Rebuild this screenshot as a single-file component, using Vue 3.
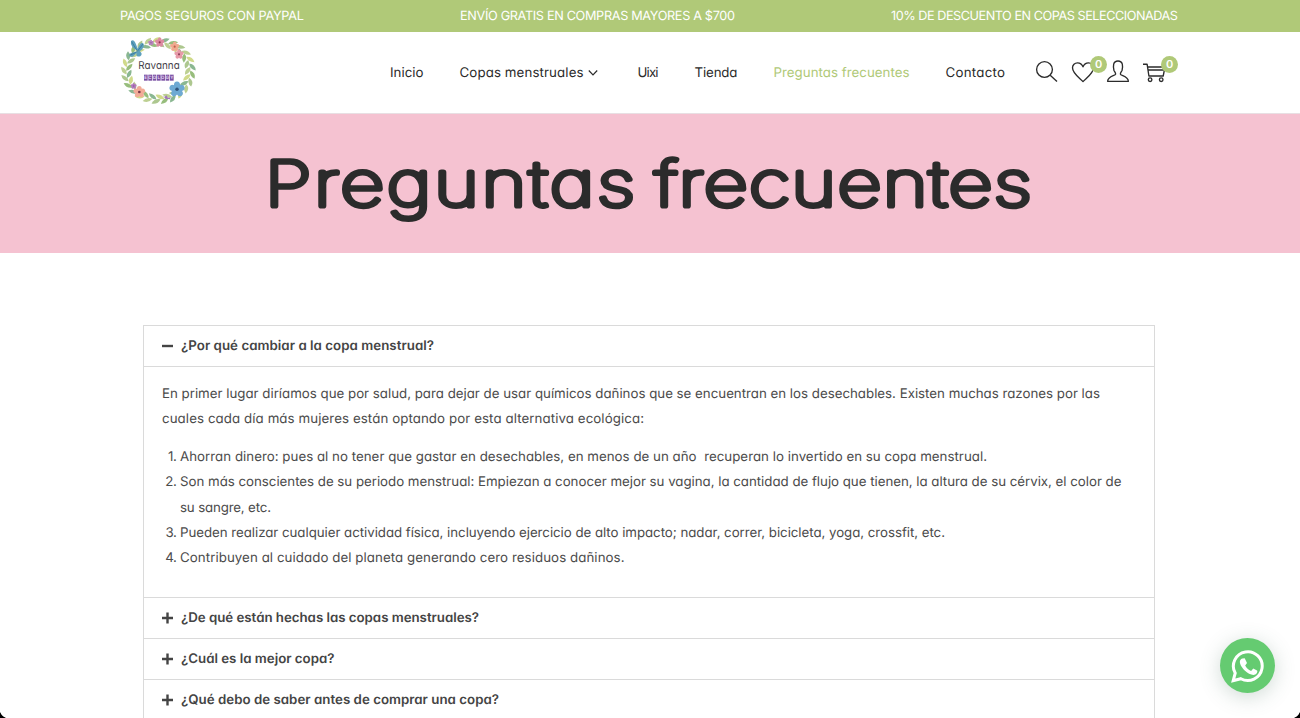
<script setup>
const promos = [
  { text: 'PAGOS SEGUROS CON PAYPAL', width: 184 },
  { text: 'ENVÍO GRATIS EN COMPRAS MAYORES A $700', width: 275 },
  { text: '10% DE DESCUENTO EN COPAS SELECCIONADAS', width: 287 },
]

const links = [
  { text: 'Inicio', width: 33.5 },
  { text: 'Copas menstruales', width: 124, menu: true },
  { text: 'Uixi', width: 21 },
  { text: 'Tienda', width: 43 },
  { text: 'Preguntas frecuentes', width: 136, active: true },
  { text: 'Contacto', width: 59.5 },
]

const intro = [
  { text: 'En primer lugar diríamos que por salud, para dejar de usar químicos dañinos que se encuentran en los desechables. Existen muchas razones por las', width: 938 },
  { text: 'cuales cada día más mujeres están optando por esta alternativa ecológica:', width: 482 },
]

const reasons = [
  [{ text: 'Ahorran dinero: pues al no tener que gastar en desechables, en menos de un año\u00a0 recuperan lo invertido en su copa menstrual.', width: 807 }],
  [
    { text: 'Son más conscientes de su periodo menstrual: Empiezan a conocer mejor su vagina, la cantidad de flujo que tienen, la altura de su cérvix, el color de', width: 941.5 },
    { text: 'su sangre, etc.', width: 91 },
  ],
  [{ text: 'Pueden realizar cualquier actividad física, incluyendo ejercicio de alto impacto; nadar, correr, bicicleta, yoga, crossfit, etc.', width: 765 }],
  [{ text: 'Contribuyen al cuidado del planeta generando cero residuos dañinos.', width: 444.5 }],
]

const questions = [
  { text: '¿De qué están hechas las copas menstruales?', width: 298 },
  { text: '¿Cuál es la mejor copa?', width: 153.5 },
  { text: '¿Qué debo de saber antes de comprar una copa?', width: 318 },
]

// Leaves around the logo wreath: position on the ring, tilt and colour
const greens = ['#bdd092', '#97bd7c', '#d0da8a', '#adc78f', '#8ab791']
const leaves = Array.from({ length: 50 }, (_, i) => {
  const angle = i * (360 / 50)
  return {
    color: greens[i % greens.length],
    transform: `translate(145 122) scale(1.05 0.94) rotate(${angle}) translate(${i % 2 ? 98 : 84} 0) rotate(${i % 2 ? 58 : 122})`,
  }
})
const flowers = [
  { x: 149, y: 37, r: 8, c: '#dc8ba0', m: '#8f3950' },
  { x: 207, y: 73, r: 8, c: '#e79aa8', m: '#91405a' },
  { x: 194, y: 50, r: 8, c: '#f0aa90', m: '#c05e4b' },
  { x: 88, y: 186, r: 10, c: '#f2ab97', m: '#793747' },
  { x: 201, y: 178, r: 13, c: '#6ea9d3', m: '#31557c' },
  { x: 71, y: 168, r: 5, c: '#b276bd', m: '#88559d' },
  { x: 123, y: 38, r: 5, c: '#b885bd', m: '#91629e' },
]
const petals = [0, 72, 144, 216, 288]

// Tracks a line of text so that it fills its measure
const vFit = {
  mounted(el, { value }) {
    const spacing = (value - el.getBoundingClientRect().width) / (el.textContent.length - 1)
    el.style.letterSpacing = `${spacing}px`
    el.style.marginRight = `${-spacing}px`
  },
}
</script>

<template>
  <div class="page">
    <div class="promo">
      <span v-for="p in promos" :key="p.text" v-fit="p.width" class="line">{{ p.text }}</span>
    </div>

    <header class="header">
      <div class="logo">
        <svg viewBox="0 0 300 255" width="100" height="85">
          <path v-for="(l, i) in leaves" :key="i" :transform="l.transform" d="M-14 0Q0 -12 15 0Q0 11 -14 0Z" :fill="l.color" />
          <path d="M85 63Q59 51 63 33Q71 25 78 43L83 56Q92 34 101 41Q104 54 89 64Q100 72 91 79Q78 83 79 68Q67 86 58 78Q56 69 73 66Z" fill="#5da0bd" />
          <path d="M81 62L65 35M81 65L99 42M79 67L61 75" stroke="#407f9e" stroke-width="3" fill="none" />
          <g v-for="f in flowers" :key="f.x" :transform="`translate(${f.x} ${f.y})`">
            <ellipse v-for="a in petals" :key="a" :transform="`rotate(${a})`" cx="0" :cy="-f.r * 0.9" :rx="f.r * 0.72" :ry="f.r * 0.9" :fill="f.c" />
            <circle :r="f.r * 0.4" :fill="f.m" />
          </g>
          <path d="M157 196l7 5 5 -5 5 8 8 -2 -2 6 -13 -2z" fill="#a174ba" />
          <text class="logo-name" x="85" y="118" textLength="124" lengthAdjust="spacingAndGlyphs">Ravanna</text>
          <g fill="#7950a3">
            <rect v-for="n in 7" :key="n" :x="89 + n * 13" y="134" width="11" height="18" />
          </g>
          <text class="logo-tag" x="103" y="148" textLength="87">ECOLOGY</text>
        </svg>
      </div>
      <nav class="nav">
        <a v-for="l in links" :key="l.text" class="link" :class="{ active: l.active, menu: l.menu }">
          <span v-fit="l.width" class="line">{{ l.text }}</span>
          <svg v-if="l.menu" class="chevron" viewBox="0 0 10 8" width="10" height="8"><path d="M.8 1.5L5 5.8L9.2 1.5" /></svg>
        </a>
      </nav>
      <div class="tools">
        <svg class="icon" viewBox="0 0 24 24"><circle cx="9.5" cy="9.5" r="7.9" /><path d="M15.2 15.2L22 21.5" /></svg>
        <span class="tool">
          <svg class="icon" viewBox="0 0 24 24"><path d="M12 21.6C9.5 18.7 1.5 13.8 1.5 7.8C1.5 4.7 3.8 2.8 6.5 2.8C9 2.8 11 4.3 12 6.8C13 4.3 15 2.8 17.5 2.8C20.2 2.8 22.5 4.7 22.5 7.8C22.5 13.8 14.5 18.7 12 21.6Z" /></svg>
          <b class="badge">0</b>
        </span>
        <svg class="icon" viewBox="0 0 24 24"><path d="M9.6 14.1C9.8 12.7 8.5 11.9 7.9 10.2C7.4 8.2 7.4 5.5 7.7 4.2C8.2 2.2 9.7 1 12 1S15.8 2.2 16.3 4.2C16.6 5.5 16.6 8.2 16.1 10.2C15.5 11.9 14.2 12.7 14.4 14.1C14.6 16 21.8 15.8 22.4 21.3H1.6C2.2 15.8 9.4 16 9.6 14.1Z" /></svg>
        <span class="tool">
          <svg class="icon" viewBox="0 0 24 24"><path d="M1 4.2H5.1L6.9 16H21.2L23 7H5.6M6 10H22M7 16H21" /><circle cx="8.1" cy="19.7" r="1.8" /><circle cx="19.2" cy="19.7" r="1.8" /></svg>
          <b class="badge">0</b>
        </span>
      </div>
    </header>

    <section class="hero">
      <h1 class="title">
        <svg width="1300" height="139" viewBox="0 0 1300 139">
          <g class="letters" transform="scale(1.24 1)">
            <text x="213.5" y="91.5" textLength="298.5">Preguntas</text>
            <text x="528" y="91.5" textLength="304">frecuentes</text>
          </g>
        </svg>
      </h1>
    </section>

    <main class="accordion">
      <div class="question">
        <svg class="sign" viewBox="0 0 12 12"><path d="M0 6H11" /></svg>
        <span v-fit="253" class="line">¿Por qué cambiar a la copa menstrual?</span>
      </div>
      <div class="answer">
        <p class="intro">
          <span v-for="l in intro" :key="l.text" class="row"><span v-fit="l.width" class="line">{{ l.text }}</span></span>
        </p>
        <div v-for="(r, i) in reasons" :key="i" class="reason">
          <span class="number">{{ i + 1 }}.</span>
          <div>
            <span v-for="l in r" :key="l.text" class="row"><span v-fit="l.width" class="line">{{ l.text }}</span></span>
          </div>
        </div>
      </div>
      <div v-for="q in questions" :key="q.text" class="question">
        <svg class="sign" viewBox="0 0 12 12"><path d="M0 6H11M5.5 .5V11.5" /></svg>
        <span v-fit="q.width" class="line">{{ q.text }}</span>
      </div>
    </main>

    <div class="chat">
      <svg viewBox="0 0 36 36" width="36" height="36">
        <path class="bubble" d="M3.2 32.6L5.2 25.1A14.4 14.4 0 1 1 10.8 30.7Z" />
        <path class="phone" d="M12.4 10.5L14.7 10.2L17 15L15.2 17.4C16.4 20 18.4 21.8 21.1 23L23.3 20.6L27 22.6C28 23.2 26.8 26 25.2 26.6C22.5 27.8 18 25.8 14.7 22.6C11.3 19.2 9.1 15.1 10.1 12.6C10.4 11.6 11.3 10.8 12.4 10.5Z" />
      </svg>
    </div>
    <i class="corner left"></i>
    <i class="corner right"></i>
  </div>
</template>

<style>
body {
  overflow: hidden;
}
</style>

<style scoped>
.page {
  position: relative;
  width: 1300px;
  height: 718px;
  overflow: hidden;
  background: #fff;
  color: #4b4b4b;
  font-family: Inter, "Open Sans", sans-serif;
  font-feature-settings: "cv11";
  font-size: 13.3px;
  text-rendering: geometricPrecision;
}
.line {
  display: inline-block;
  flex: none;
  white-space: pre;
}
.promo {
  display: flex;
  justify-content: space-between;
  height: 31.5px;
  box-sizing: border-box;
  padding: 0 122px 0 120px;
  line-height: 33px;
  font-size: 12.7px;
  color: #fff;
  background: #b0c978;
}
.header {
  display: flex;
  height: 81.5px;
  border-bottom: 1px solid #e8dfe3;
}
.logo {
  width: 100px;
  margin-left: 110px;
  margin-top: -1.5px;
}
.logo svg {
  display: block;
}
.logo-name {
  font-family: Inter, sans-serif;
  font-size: 32px;
  font-weight: 400;
  fill: #45424a;
}
.logo-tag {
  font-family: Inter, sans-serif;
  font-size: 13px;
  font-weight: 600;
  fill: #e9def5;
}
.nav {
  display: flex;
  align-items: center;
  gap: 36px;
  margin-left: 180px;
  padding-top: 1.5px;
  color: #2b2b2b;
}
.link {
  display: flex;
  align-items: center;
}
.menu {
  margin-right: 4px;
}
.active {
  color: #b0c978;
}
.chevron {
  margin-left: 4px;
  fill: none;
  stroke: #2b2b2b;
  stroke-width: 1.2;
}
.tools {
  display: flex;
  align-items: center;
  gap: 11.5px;
  margin-left: 30px;
}
.icon {
  display: block;
  flex: none;
  width: 24px;
  height: 24px;
  fill: none;
  stroke: #2b2b2b;
  stroke-width: 1.35;
  stroke-linejoin: round;
}
.tool {
  position: relative;
}
.badge {
  position: absolute;
  left: 19.5px;
  top: -4px;
  width: 17px;
  height: 17px;
  border-radius: 50%;
  background: #b0c978;
  color: #fff;
  font-size: 11px;
  font-weight: 600;
  line-height: 17px;
  text-align: center;
}
.hero {
  height: 139px;
  background: #f5c2d1;
}
.title {
  margin: 0;
  font-size: 62px;
  font-weight: 100;
}
.title svg {
  display: block;
}
.letters {
  fill: #2b2b2b;
  stroke: #2b2b2b;
  stroke-width: 5.1px;
  stroke-linejoin: round;
  stroke-linecap: round;
}
.accordion {
  width: 1010px;
  margin: 72px 0 0 143px;
  border: 1px solid #dadada;
  border-bottom: 0;
}
.question {
  display: flex;
  align-items: center;
  height: 40px;
  padding-left: 18px;
  border-bottom: 1px solid #dadada;
  font-weight: 600;
  color: #444;
}
.sign {
  width: 12px;
  height: 12px;
  margin-right: 7px;
  fill: none;
  stroke: #444;
  stroke-width: 2.4;
}
.answer {
  height: 231px;
  box-sizing: border-box;
  padding: 14.9px 18px 0;
  border-bottom: 1px solid #dadada;
  line-height: 25.3px;
}
.intro {
  margin: 0 0 12.7px;
}
.row {
  display: block;
  height: 25.3px;
}
.reason {
  display: grid;
  grid-template-columns: 14.5px 1fr;
  column-gap: 3.5px;
}
.number {
  justify-self: end;
  letter-spacing: -0.4px;
}
.chat {
  position: absolute;
  left: 1220px;
  top: 638px;
  display: flex;
  align-items: center;
  justify-content: center;
  width: 55px;
  height: 55px;
  border-radius: 50%;
  background: #65cb71;
  box-shadow: 0 4px 20px rgba(70, 110, 90, 0.25);
}
.bubble {
  fill: none;
  stroke: #fff;
  stroke-width: 3;
}
.phone {
  fill: #fff;
}
.corner {
  position: absolute;
  bottom: 0;
  width: 9px;
  height: 9px;
}
.left {
  left: 0;
  background: radial-gradient(circle at 100% 0, transparent 9px, #000 9.7px);
}
.right {
  right: 0;
  background: radial-gradient(circle at 0 0, transparent 9px, #000 9.7px);
}
</style>
